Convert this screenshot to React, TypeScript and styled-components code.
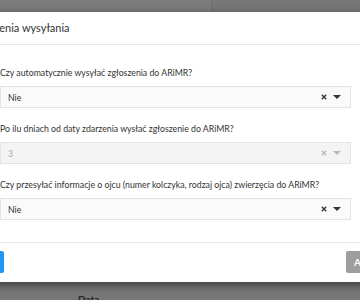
import styled, { createGlobalStyle } from "styled-components";

const GlobalStyle = createGlobalStyle`
  * { box-sizing: border-box; }
  html, body {
    margin: 0;
    padding: 0;
    width: 360px;
    height: 300px;
    overflow: hidden;
    background: #777;
  }
  body {
    font-family: Lato, "Open Sans", sans-serif;
    color: #333;
  }
`;

type Field = { label: string; value: string; disabled?: boolean };

const fields: Field[] = [
  { label: "Czy automatycznie wysyłać zgłoszenia do ARiMR?", value: "Nie" },
  {
    label: "Po ilu dniach od daty zdarzenia wysłać zgłoszenie do ARiMR?",
    value: "3",
    disabled: true,
  },
  {
    label:
      "Czy przesyłać informacje o ojcu (numer kolczyka, rodzaj ojca) zwierzęcia do ARiMR?",
    value: "Nie",
  },
];

function SelectBox({ value, disabled }: { value: string; disabled?: boolean }) {
  const tone = disabled ? "#b8b8b8" : "#333";
  return (
    <Select $disabled={disabled}>
      <Value>{value}</Value>
      <Icons>
        <svg width="6" height="6" viewBox="0 0 6 6">
          <path d="M0.8 0.8L5.2 5.2M5.2 0.8L0.8 5.2" stroke={tone} strokeWidth="1.3" />
        </svg>
        <svg width="8" height="4" viewBox="0 0 8 4">
          <path d="M0 0H8L4 4Z" fill={tone} />
        </svg>
      </Icons>
    </Select>
  );
}

export default function App() {
  return (
    <>
      <GlobalStyle />
      <Page>
        <TopBand>
          <TopCell $width={212} $shade="#7c7c7c" $edge />
          <TopCell $shade="#777" />
        </TopBand>
        <Modal>
          <Header>Ustawienia wysyłania</Header>
          <Body>
            {fields.map((f) => (
              <FormGroup key={f.label}>
                <Label>{f.label}</Label>
                <SelectBox value={f.value} disabled={f.disabled} />
              </FormGroup>
            ))}
          </Body>
          <Footer>
            <Button $bg="#2196f3">Zapisz</Button>
            <Button $bg="#9e9e9e">Anuluj</Button>
          </Footer>
        </Modal>
        <BottomBand>Data</BottomBand>
      </Page>
    </>
  );
}

const Page = styled.div`
  display: flex;
  flex-direction: column;
  height: 300px;
  overflow: hidden;
`;

const TopBand = styled.div`
  display: flex;
  height: 12px;
  flex-shrink: 0;
`;

const TopCell = styled.div<{ $width?: number; $shade: string; $edge?: boolean }>`
  width: ${({ $width }) => ($width ? `${$width}px` : "auto")};
  flex: ${({ $width }) => ($width ? "none" : "1")};
  background: ${({ $shade }) => $shade};
  border-right: ${({ $edge }) => ($edge ? "1px solid #6e6e6e" : "none")};
`;

const Modal = styled.div`
  position: relative;
  z-index: 1;
  flex-shrink: 0;
  width: 468px;
  margin-left: -58px;
  background: #fff;
  box-shadow: 0 3px 9px rgba(0, 0, 0, 0.5);
`;

const Header = styled.div`
  height: 33px;
  padding: 0 15px 0 24px;
  border-bottom: 1px solid #e8e8e8;
  font-size: 11px;
  line-height: 32px;
  color: #333;
  white-space: nowrap;
`;

const Body = styled.div`
  padding: 19px 59px 10px 58px;
`;

const FormGroup = styled.div`
  margin-bottom: 12px;
`;

const Label = styled.label`
  display: block;
  margin-bottom: 5px;
  font-size: 8.75px;
  line-height: 17px;
  color: #333;
  white-space: nowrap;
`;

const Select = styled.div<{ $disabled?: boolean }>`
  display: flex;
  align-items: center;
  height: 22px;
  padding: 0 9px 0 7px;
  border: 1px solid #e3e3e3;
  background: ${({ $disabled }) => ($disabled ? "#f4f4f4" : "#fafafa")};
  color: ${({ $disabled }) => ($disabled ? "#aaa" : "#333")};
  font-size: 8.75px;
`;

const Value = styled.span`
  flex: 1;
`;

const Icons = styled.span`
  display: flex;
  align-items: center;
  gap: 6px;
`;

const Footer = styled.div`
  display: flex;
  justify-content: space-between;
  padding: 8px 19px 9px 18px;
  border-top: 1px solid #e8e8e8;
`;

const Button = styled.button<{ $bg: string }>`
  height: 22px;
  padding: 0 8px;
  border: none;
  border-radius: 2px;
  background: ${({ $bg }) => $bg};
  color: #fff;
  font-family: Lato, "Open Sans", sans-serif;
  font-size: 10px;
  font-weight: 700;
`;

const BottomBand = styled.div`
  flex: 1;
  padding: 11px 0 0 78px;
  font-size: 10px;
  font-weight: 700;
  color: #222;
`;
